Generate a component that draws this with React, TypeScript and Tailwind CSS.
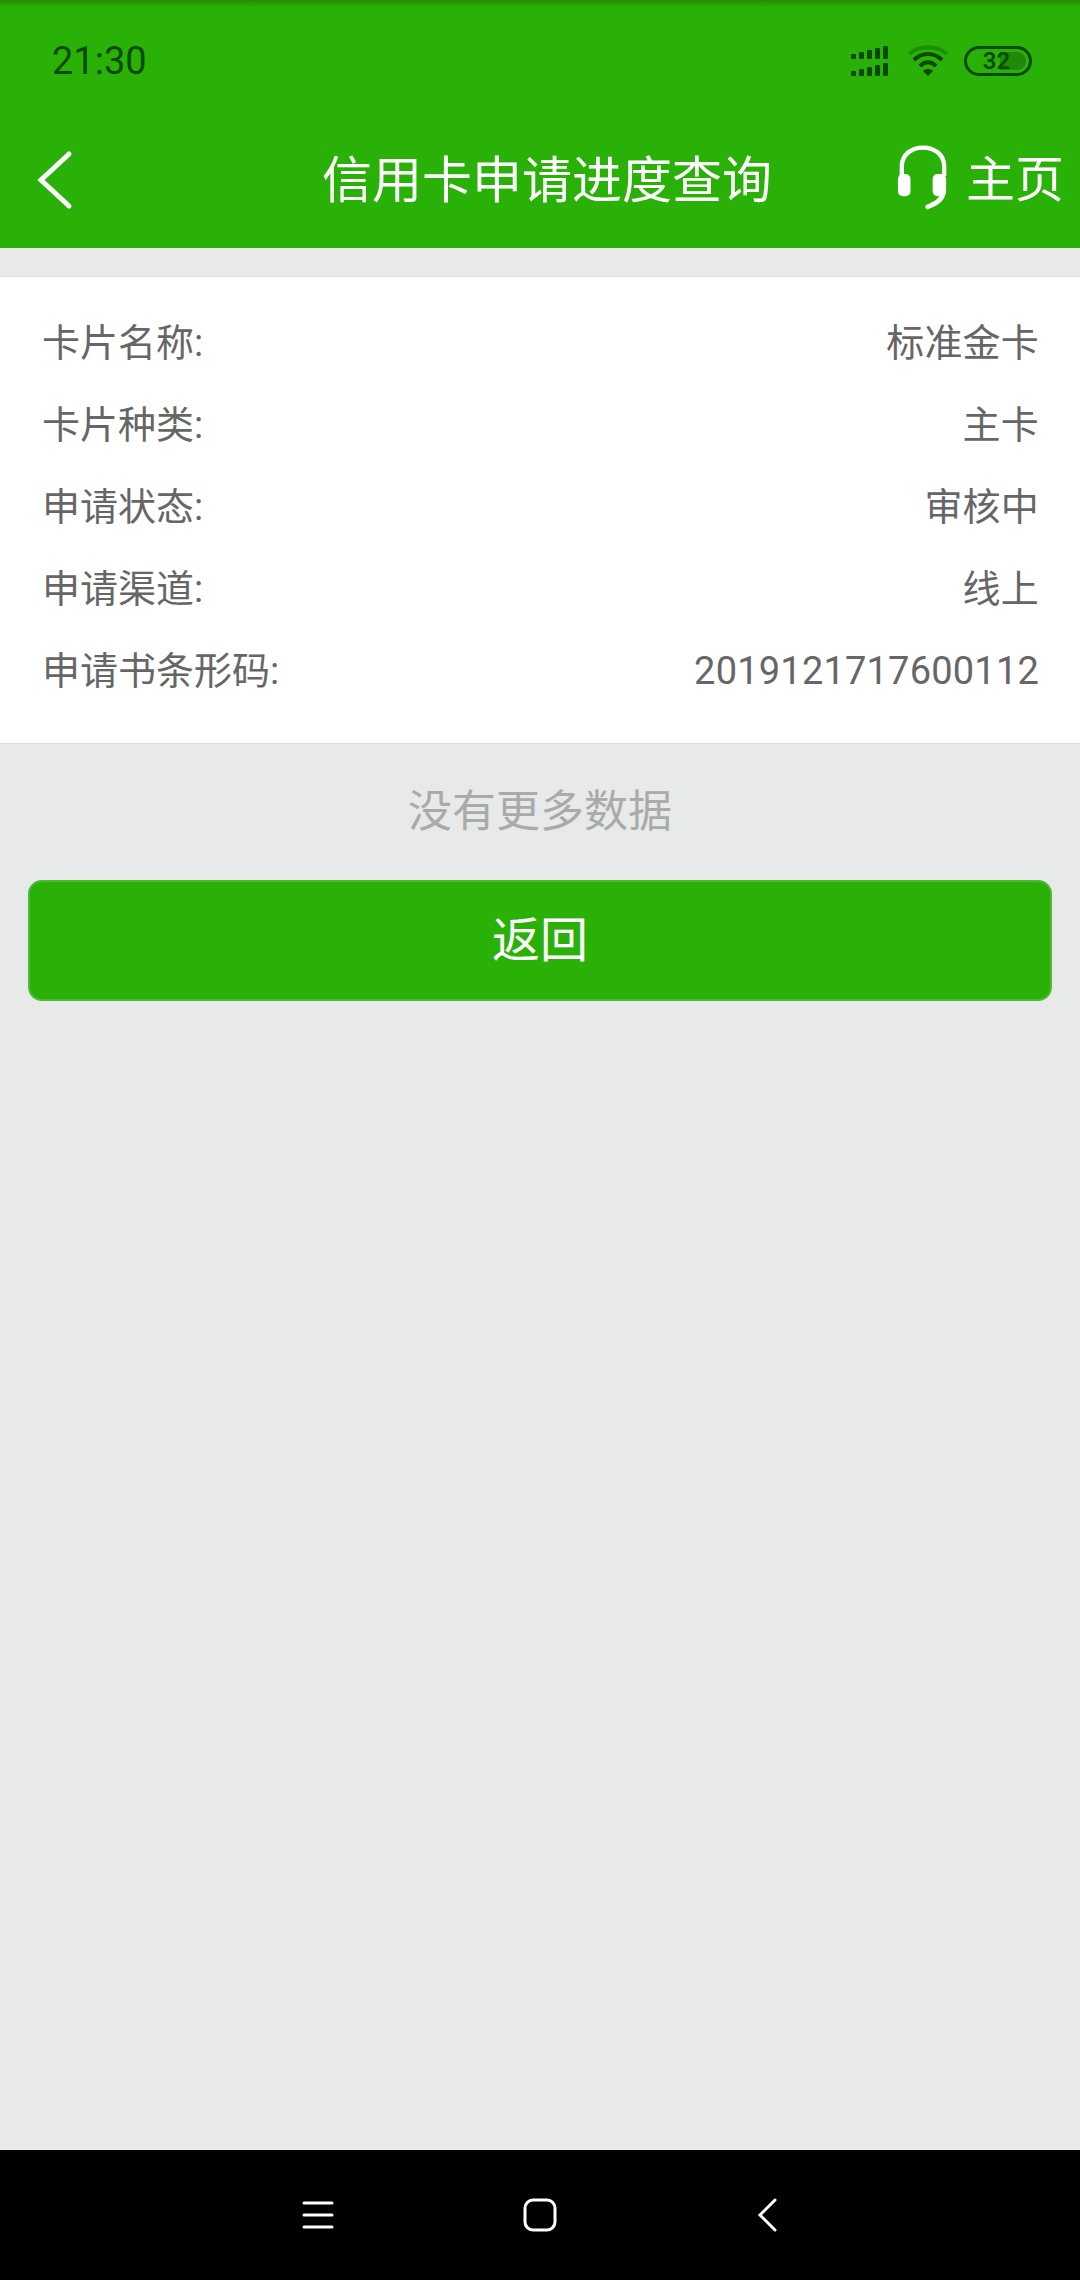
const rows = [
  ["卡片名称:", "标准金卡"],
  ["卡片种类:", "主卡"],
  ["申请状态:", "审核中"],
  ["申请渠道:", "线上"],
  ["申请书条形码:", "2019121717600112"],
];

function Signal() {
  const bars = [
    [0, 9],
    [8, 7],
    [16, 5],
    [24, 3],
    [32, 1],
  ];
  return (
    <svg width="42" height="32" viewBox="0 0 42 32" fill="#0a4a00">
      {bars.map(([x, y]) => (
        <g key={x}>
          <rect x={x + 1} y={y} width="5" height={14 - y} rx="1" />
          <rect x={x + 1} y={y + 17} width="5" height={14 - y} rx="1" />
        </g>
      ))}
    </svg>
  );
}

function Wifi() {
  return (
    <svg width="42" height="32" viewBox="0 0 42 32" fill="none">
      <path d="M2 9 C12 0 30 0 40 9" stroke="#1f8f00" strokeWidth="4" />
      <path d="M7 15 C15 7 27 7 35 15" stroke="#0a4a00" strokeWidth="4" />
      <path d="M13 21 C18 16 24 16 29 21" stroke="#0a4a00" strokeWidth="4" />
      <path d="M21 31 L16 26 C19 23 23 23 26 26 Z" fill="#0a4a00" />
    </svg>
  );
}

function Battery() {
  return (
    <div className="relative flex h-[30px] w-[68px] items-center justify-center rounded-full border-[3px] border-[#0a4a00]">
      <div className="absolute right-[3px] top-[3px] h-[18px] w-[26px] rounded-r-full bg-[#1f8a0a]" />
      <span className="relative pr-[3px] text-[24px] font-semibold leading-none text-[#0a4a00]">32</span>
    </div>
  );
}

function Headset() {
  return (
    <svg width="52" height="70" viewBox="0 0 54 70" fill="none" stroke="white">
      <path d="M5 34 V24 C5 -2 49 -2 49 24 V34" strokeWidth="4.5" />
      <rect x="1" y="32" width="13" height="23" rx="5" fill="white" stroke="none" />
      <rect x="37" y="32" width="14" height="23" rx="5" fill="white" stroke="none" />
      <path d="M48 52 C46 60 39 63 32 66" strokeWidth="5" strokeLinecap="round" />
    </svg>
  );
}

export default function App() {
  return (
    <div className="flex h-[2280px] w-[1080px] flex-col overflow-hidden bg-[#e8eaea] font-['Roboto','Noto_Sans_CJK_SC',sans-serif]">
      <header className="h-[248px] shrink-0 bg-gradient-to-b from-[#278c05] from-0% to-[#2ab107] to-[3%]">
        <div className="flex h-[120px] items-center justify-between pl-[52px] pr-[48px] pt-[2px]">
          <span className="text-[38px] leading-none text-[#0a4a00]">21:30</span>
          <div className="flex items-center gap-[15px]">
            <Signal />
            <Wifi />
            <Battery />
          </div>
        </div>
        <div className="relative flex h-[128px] items-center justify-center pb-[6px] pl-[14px]">
          <svg className="absolute left-[36px] top-[30px]" width="38" height="60" viewBox="0 0 38 60" fill="none" stroke="white" strokeWidth="5" strokeLinecap="round">
            <path d="M33 4 L5 30 L33 56" />
          </svg>
          <h1 className="text-[50px] font-normal leading-none text-white">信用卡申请进度查询</h1>
          <div className="absolute right-[16px] top-[22px] flex items-center gap-[17px]">
            <Headset />
            <span className="pt-[6px] text-[49px] leading-none text-white">主页</span>
          </div>
        </div>
      </header>

      <main className="flex grow flex-col">
        <section className="mt-[28px] border-y border-[#dcdede] bg-white pb-[31px] pl-[42px] pr-[41px] pt-[25px]">
          {rows.map(([k, v]) => (
            <div key={k} className="flex h-[82px] items-center justify-between text-[38px] text-[#666666]">
              <span>{k}</span>
              <span className="tracking-[0.2px]">{v}</span>
            </div>
          ))}
        </section>
        <p className="mt-[46px] text-center text-[44px] leading-none text-[#aaaaaa]">没有更多数据</p>
        <button className="mx-[28px] mt-[46px] flex h-[121px] items-center justify-center rounded-[14px] border-2 border-[#4fb836] bg-[#2ab107] text-[48px] text-white">
          返回
        </button>
      </main>

      <nav className="flex h-[130px] shrink-0 items-center bg-black pl-[302px]">
        <svg width="32" height="30" viewBox="0 0 32 30" stroke="white" strokeWidth="3" strokeLinecap="round">
          <path d="M2 3 H30 M2 15 H30 M2 27 H30" />
        </svg>
        <svg className="ml-[189px]" width="34" height="34" viewBox="0 0 34 34" fill="none" stroke="white" strokeWidth="3">
          <rect x="2" y="2" width="30" height="30" rx="8" />
        </svg>
        <svg className="ml-[200px]" width="20" height="34" viewBox="0 0 20 34" fill="none" stroke="white" strokeWidth="3" strokeLinecap="round">
          <path d="M18 2 L3 17 L18 32" />
        </svg>
      </nav>
    </div>
  );
}
